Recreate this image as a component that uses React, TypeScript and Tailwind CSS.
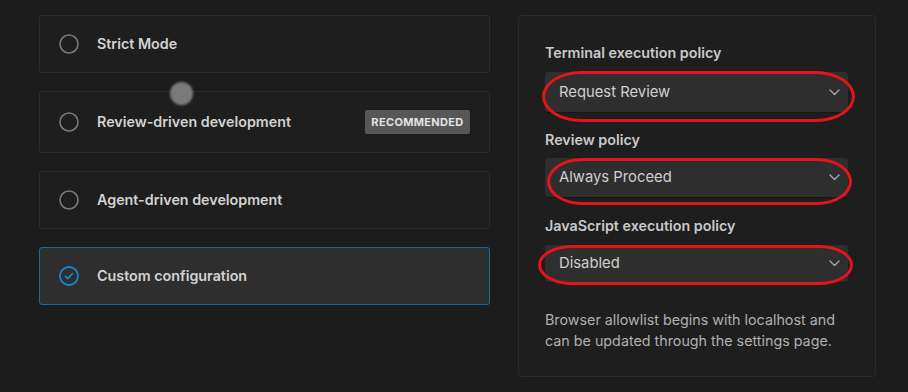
import React from "react";

function Radio({ checked }: { checked?: boolean }) {
  if (checked) {
    return (
      <svg width="20" height="20" viewBox="0 0 20 20" className="shrink-0">
        <circle cx="10" cy="10" r="9" fill="none" stroke="#1b86cc" strokeWidth="1.8" />
        <path d="M6.4 10.3 L8.8 12.6 L13.4 7.6" fill="none" stroke="#1b86cc" strokeWidth="1.7" strokeLinecap="round" strokeLinejoin="round" />
      </svg>
    );
  }
  return (
    <svg width="20" height="20" viewBox="0 0 20 20" className="shrink-0">
      <circle cx="10" cy="10" r="9" fill="none" stroke="#7a7a7a" strokeWidth="1.6" />
    </svg>
  );
}

function Card({
  label,
  h,
  checked,
  badge,
}: {
  label: string;
  h: string;
  checked?: boolean;
  badge?: string;
}) {
  return (
    <div
      className={
        "flex items-center pl-[19px] pr-[19px] rounded-[3px] border " +
        h +
        (checked ? " bg-[#2e2e2e] border-[#1d6b9c]" : " bg-[#1e1e1e] border-[#2c2c2c]")
      }
    >
      <Radio checked={checked} />
      <span className="ml-[18px] text-[14.3px] font-semibold text-[#d2d2d2]">{label}</span>
      {badge && (
        <span className="ml-auto h-[24px] w-[105px] flex items-center justify-center rounded-[2px] bg-[#575757] text-[11px] font-bold tracking-[0.03em] text-[#e2e2e2]">
          {badge}
        </span>
      )}
    </div>
  );
}

function Chevron() {
  return (
    <svg width="11" height="7" viewBox="0 0 11 7" className="shrink-0">
      <path d="M1 1 L5.5 5.5 L10 1" fill="none" stroke="#a8a8a8" strokeWidth="1.3" strokeLinecap="round" strokeLinejoin="round" />
    </svg>
  );
}

function Select({
  value,
  h,
  ring,
}: {
  value: string;
  h: string;
  ring: string;
}) {
  return (
    <div className="relative">
      <div className={"flex items-center pl-[14px] pr-[8px] rounded-[3px] bg-[#2e2e2e] shadow-[0_1px_0_#161616] " + h}>
        <span className="text-[14.8px] text-[#d0d0d0]">{value}</span>
        <span className="ml-auto">
          <Chevron />
        </span>
      </div>
      <div className={"pointer-events-none absolute border-[3px] border-[#e5131c] " + ring} />
    </div>
  );
}

export default function App() {
  return (
    <div
      className="relative w-[908px] h-[392px] bg-[#1c1c1c] flex pt-[15px] pl-[39px] overflow-hidden"
      style={{ fontFamily: "Inter, 'Noto Sans', sans-serif" }}
    >
      <div className="w-[451px] flex flex-col gap-[18px]">
        <Card label="Strict Mode" h="h-[58px]" />
        <Card label="Review-driven development" h="h-[62px]" badge="RECOMMENDED" />
        <Card label="Agent-driven development" h="h-[58px]" />
        <Card label="Custom configuration" h="h-[58px]" checked />
      </div>

      <div className="ml-[28px] w-[358px] h-[362px] rounded-[4px] border border-[#2b2b2b] bg-[#1e1e1e] pl-[26px] pr-[27px] pt-[27px]">
        <div className="text-[14.3px] font-semibold text-[#c9c9c9] leading-[20px]">Terminal execution policy</div>
        <div className="mt-[9px]">
          <Select value="Request Review" h="h-[40px]" ring="left-[-3px] right-[-7px] top-[-1px] bottom-[-10px] rounded-[40px/26px]" />
        </div>
        <div className="mt-[18px] text-[14.3px] font-semibold text-[#c9c9c9] leading-[20px]">Review policy</div>
        <div className="mt-[8px]">
          <Select value="Always Proceed" h="h-[39px]" ring="left-[2px] right-[-4px] top-[0px] bottom-[-8px] rounded-[36px/24px]" />
        </div>
        <div className="mt-[19px] text-[14.3px] font-semibold text-[#c9c9c9] leading-[20px]">JavaScript execution policy</div>
        <div className="mt-[9px]">
          <Select value="Disabled" h="h-[37px]" ring="left-[-7px] right-[-5px] top-[0px] bottom-[-3px] rounded-[36px/21px]" />
        </div>
        <p className="mt-[27px] text-[14.3px] leading-[21px] text-[#b0b0b0]">
          Browser allowlist begins with localhost and can be updated through the settings page.
        </p>
      </div>

      <div className="pointer-events-none absolute left-[170px] top-[82px] w-[23px] h-[23px] rounded-full bg-[#7a7a7a] blur-[1px]" />
    </div>
  );
}
